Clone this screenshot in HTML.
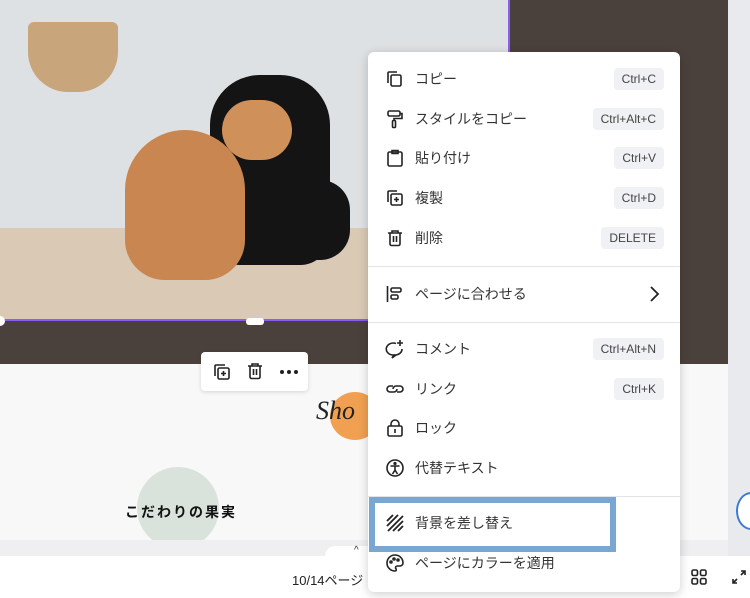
<!DOCTYPE html><html><head><meta charset="utf-8"><style>
*{margin:0;padding:0;box-sizing:border-box}
body{width:750px;height:598px;overflow:hidden;position:relative;background:#4b413c;font-family:"Liberation Sans","Noto Sans CJK JP",sans-serif}
.abs{position:absolute}
.row{position:absolute;left:368px;width:312px;height:40px;display:flex;align-items:center;font-size:14px;color:#333}
.row svg{position:absolute;left:17px;width:20px;height:20px}
.row .t{position:absolute;left:47px}
.k{position:absolute;right:16px;background:#f0f1f4;border-radius:4px;font-size:12px;color:#444;padding:4px 8px}
.div{position:absolute;left:368px;width:312px;height:1px;background:#e3e3e6}
</style></head><body>
<div class="abs" style="left:728px;top:0;width:22px;height:598px;background:#e9eaee"></div>
<div class="abs" style="left:0;top:0;width:510px;height:321px;background:#dee1e3;overflow:hidden;border-right:2px solid #8b5cf6;border-bottom:2px solid #8b5cf6">
 <div class="abs" style="left:0;top:228px;width:510px;height:95px;background:#d9c9b5"></div>
 <div class="abs" style="left:28px;top:22px;width:90px;height:70px;background:#c9a57c;border-radius:6px 6px 40px 40px"></div>
 <div class="abs" style="left:210px;top:75px;width:120px;height:190px;background:#141414;border-radius:50px 50px 30px 30px"></div>
 <div class="abs" style="left:270px;top:180px;width:80px;height:80px;background:#141414;border-radius:30px"></div>
 <div class="abs" style="left:125px;top:130px;width:120px;height:150px;background:#c98650;border-radius:60px 60px 40px 40px"></div>
 <div class="abs" style="left:222px;top:100px;width:70px;height:60px;background:#d0905a;border-radius:30px"></div>
</div>
<div class="abs" style="left:-5px;top:316px;width:10px;height:10px;border-radius:50%;background:#fff"></div>
<div class="abs" style="left:246px;top:318px;width:18px;height:7px;border-radius:3px;background:#fff"></div>
<div class="abs" style="left:0;top:364px;width:728px;height:177px;background:#f8f8f9"></div>
<div class="abs" style="left:137px;top:467px;width:82px;height:82px;border-radius:50%;background:#d9e3dc"></div>
<div class="abs" style="left:125px;top:502px;font-size:14px;font-weight:bold;letter-spacing:2px;color:#111">こだわりの果実</div>
<div class="abs" style="left:330px;top:392px;width:50px;height:48px;border-radius:50%;background:#f0a050"></div>
<div class="abs" style="left:316px;top:396px;font-family:'Liberation Serif',serif;font-style:italic;font-size:26px;color:#222">Sho</div>
<div class="abs" style="left:201px;top:352px;width:107px;height:39px;background:#fff;border-radius:4px;box-shadow:0 1px 4px rgba(0,0,0,.15)">
 <svg class="abs" style="left:11px;top:10px" width="20" height="20" viewBox="0 0 20 20" fill="none" stroke="#222" stroke-width="1.6"><path d="M3 14V4a1 1 0 011-1h9"/><rect x="6" y="6" width="11" height="11" rx="1.5"/><path d="M11.5 9v5M9 11.5h5"/></svg>
 <svg class="abs" style="left:44px;top:9px" width="20" height="20" viewBox="0 0 20 20" fill="none" stroke="#222" stroke-width="1.6"><path d="M3 5h14M7 5V3h6v2M5 5v11a1.5 1.5 0 001.5 1.5h7A1.5 1.5 0 0015 16V5M8.5 8v6M11.5 8v6"/></svg>
 <svg class="abs" style="left:78px;top:17px" width="20" height="6" viewBox="0 0 20 6" fill="#222"><circle cx="3" cy="3" r="2"/><circle cx="10" cy="3" r="2"/><circle cx="17" cy="3" r="2"/></svg>
</div>
<div class="abs" style="left:0;top:540px;width:728px;height:16px;background:#efeff1"></div>
<div class="abs" style="left:0;top:556px;width:750px;height:42px;background:#fff"></div>
<div class="abs" style="left:325px;top:546px;width:60px;height:12px;background:#fff;border-radius:10px 10px 0 0"></div>
<div class="abs" style="left:354px;top:545px;font-size:10px;color:#333">^</div>
<div class="abs" style="left:292px;top:570px;font-size:13px;color:#222">10/14ページ</div>
<svg class="abs" style="left:690px;top:568px" width="18" height="18" viewBox="0 0 18 18" fill="none" stroke="#222" stroke-width="1.6"><rect x="2" y="2" width="5.5" height="5.5" rx="1.5"/><rect x="10.5" y="2" width="5.5" height="5.5" rx="1.5"/><rect x="2" y="10.5" width="5.5" height="5.5" rx="1.5"/><rect x="10.5" y="10.5" width="5.5" height="5.5" rx="1.5"/></svg>
<svg class="abs" style="left:730px;top:568px" width="18" height="18" viewBox="0 0 18 18" fill="none" stroke="#222" stroke-width="1.6"><path d="M11 3h4v4M15 3l-4 4M7 15H3v-4M3 15l4-4"/></svg>
<div class="abs" style="left:736px;top:492px;width:30px;height:38px;border:2px solid #3d7bd8;border-radius:50%;background:#fff"></div>
<div class="abs" style="left:368px;top:52px;width:312px;height:540px;background:#fff;border-radius:6px;box-shadow:0 2px 10px rgba(0,0,0,.2)"></div>
<div class="row" style="top:59px"><svg viewBox="0 0 20 20" fill="none" stroke="#222" stroke-width="1.6"><path d="M3 14V4a1 1 0 011-1h8"/><rect x="6" y="6" width="10" height="11" rx="1.5"/></svg><span class="t">コピー</span><span class="k">Ctrl+C</span></div>
<div class="row" style="top:99px"><svg viewBox="0 0 20 20" fill="none" stroke="#222" stroke-width="1.6"><rect x="3" y="2" width="12" height="5" rx="1.5"/><path d="M15 4.5h2v5H9v2"/><rect x="7.5" y="11.5" width="3" height="7" rx="1"/></svg><span class="t">スタイルをコピー</span><span class="k">Ctrl+Alt+C</span></div>
<div class="row" style="top:138px"><svg viewBox="0 0 20 20" fill="none" stroke="#222" stroke-width="1.6"><rect x="3" y="4" width="14" height="14" rx="1.5"/><path d="M7 4V2.5h6V4v1.5H7z"/></svg><span class="t">貼り付け</span><span class="k">Ctrl+V</span></div>
<div class="row" style="top:178px"><svg viewBox="0 0 20 20" fill="none" stroke="#222" stroke-width="1.6"><path d="M3 14V4a1 1 0 011-1h8"/><rect x="6" y="6" width="11" height="11" rx="1.5"/><path d="M11.5 9v5M9 11.5h5"/></svg><span class="t">複製</span><span class="k">Ctrl+D</span></div>
<div class="row" style="top:218px"><svg viewBox="0 0 20 20" fill="none" stroke="#222" stroke-width="1.6"><path d="M3 5h14M7 5V3h6v2M5 5v11a1.5 1.5 0 001.5 1.5h7A1.5 1.5 0 0015 16V5M8.5 8v6M11.5 8v6"/></svg><span class="t">削除</span><span class="k">DELETE</span></div>
<div class="div" style="top:266px"></div>
<div class="row" style="top:274px"><svg viewBox="0 0 20 20" fill="none" stroke="#222" stroke-width="1.6"><path d="M2.5 2v16"/><rect x="6" y="4" width="10" height="4" rx="1.5"/><rect x="6" y="11" width="7" height="4" rx="1.5"/></svg><span class="t">ページに合わせる</span><svg style="left:276px" viewBox="0 0 20 20" fill="none" stroke="#222" stroke-width="1.8"><path d="M7 3l7 7-7 7"/></svg></div>
<div class="div" style="top:322px"></div>
<div class="row" style="top:329px"><svg viewBox="0 0 20 20" fill="none" stroke="#222" stroke-width="1.6"><path d="M11 4.5A7 6 0 1 0 9 16l-2 3 4-3a7 6 0 0 0 6-6"/><path d="M15 1v6M12 4h6"/></svg><span class="t">コメント</span><span class="k">Ctrl+Alt+N</span></div>
<div class="row" style="top:369px"><svg viewBox="0 0 20 20" fill="none" stroke="#222" stroke-width="1.6"><path d="M8 7H5a3 3 0 000 6h4a3 3 0 003-3M12 13h3a3 3 0 000-6h-4a3 3 0 00-3 3"/></svg><span class="t">リンク</span><span class="k">Ctrl+K</span></div>
<div class="row" style="top:408px"><svg viewBox="0 0 20 20" fill="none" stroke="#222" stroke-width="1.6"><rect x="3" y="8" width="14" height="10" rx="1.5"/><path d="M6 8V6a4 4 0 018 0v2M10 11v4"/></svg><span class="t">ロック</span></div>
<div class="row" style="top:448px"><svg viewBox="0 0 20 20" fill="none" stroke="#222" stroke-width="1.6"><circle cx="10" cy="10" r="8"/><circle cx="10" cy="5.5" r=".8"/><path d="M5.5 8h9M10 8v4l-2.5 4M10 12l2.5 4"/></svg><span class="t">代替テキスト</span></div>
<div class="div" style="top:496px"></div>
<div class="row" style="top:503px"><svg viewBox="0 0 20 20" fill="none" stroke="#222" stroke-width="1.8"><path d="M2 8l6-6M2 13l11-11M3 18l15-15M8 18l10-10M13 18l5-5"/></svg><span class="t">背景を差し替え</span></div>
<div class="row" style="top:543px"><svg viewBox="0 0 20 20" fill="none" stroke="#222" stroke-width="1.6"><path d="M10 2a8 8 0 100 16c1.5 0 1.5-1.5.8-2.5s0-2.5 1.5-2.5H15a3 3 0 003-3c0-4.5-3.5-8-8-8z"/><circle cx="6" cy="9" r="1"/><circle cx="9" cy="6" r="1"/><circle cx="13" cy="7" r="1"/></svg><span class="t">ページにカラーを適用</span></div>
<div class="abs" style="left:369px;top:497px;width:247px;height:55px;border:6px solid #7aa7d2"></div>
</body></html>
